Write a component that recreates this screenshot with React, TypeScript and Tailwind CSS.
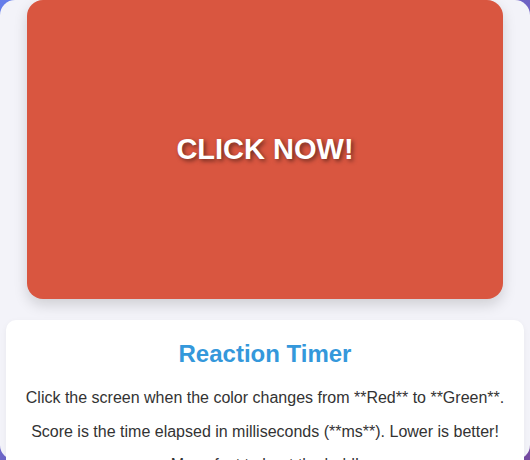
export default function App() {
  return (
    <div className="h-[460px] bg-[linear-gradient(135deg,#667eea_0%,#764ba2_100%)] font-['Liberation_Sans',Arial,sans-serif]">
      <div className="h-[460px] rounded-[15px] bg-[#f3f3f9] px-[6px] flex flex-col">
        <div className="mx-auto w-[476px] h-[299px] shrink-0 rounded-[16px] bg-[#d95640] shadow-[0_6px_14px_rgba(0,0,0,0.15)] flex items-center justify-center">
          <span className="text-white font-bold text-[29px] [text-shadow:2px_2px_4px_rgba(0,0,0,0.5)]">
            CLICK NOW!
          </span>
        </div>
        <div className="mt-[21px] shrink-0 bg-white rounded-[10px] pt-[20px] pb-[20px] px-[8px] text-center text-[#333] shadow-[0_2px_6px_rgba(0,0,0,0.05)]">
          <h2 className="text-[24px] leading-[28px] font-bold text-[#3498db]">Reaction Timer</h2>
          <p className="mt-[21px] text-[16px] leading-[18px]">
            Click the screen when the color changes from **Red** to **Green**.
          </p>
          <p className="mt-[16px] text-[16px] leading-[18px]">
            Score is the time elapsed in milliseconds (**ms**). Lower is better!
          </p>
          <p className="mt-[15px] text-[16px] leading-[18px]">
            Move fast to beat the hold!
          </p>
        </div>
      </div>
    </div>
  );
}
